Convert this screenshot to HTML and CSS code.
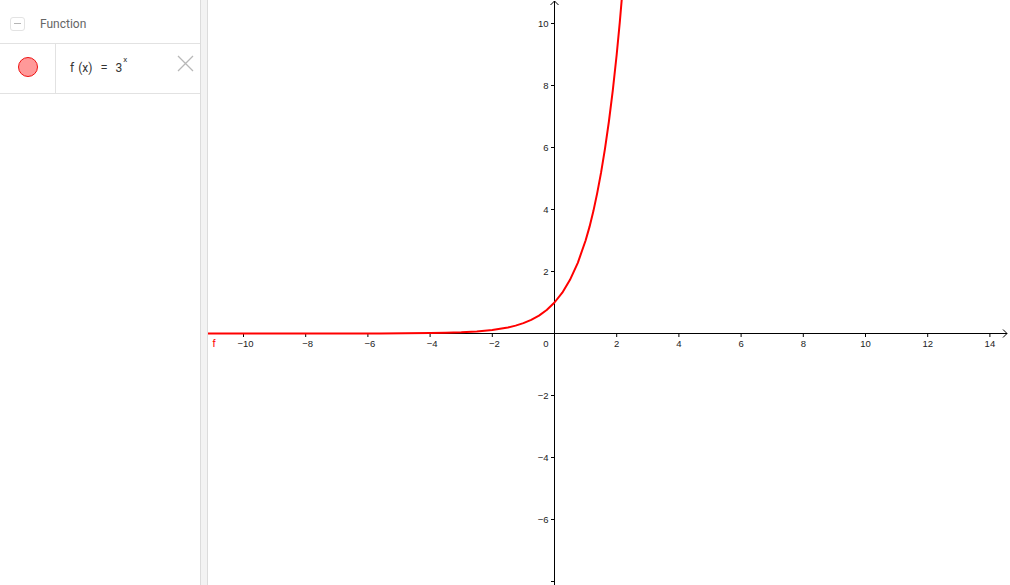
FILE: index.html
```html
<!DOCTYPE html>
<html>
<head>
<meta charset="utf-8">
<link rel="stylesheet" href="styles.css">
</head>
<body>
<div class="app">
  <aside class="panel">
    <div class="panel-header">
      <span class="collapse-btn"><span class="collapse-dash"></span></span>
      <span class="panel-title">Function</span>
    </div>
    <div class="item-row">
      <div class="item-marker"><span class="marker-dot"></span></div>
      <div class="item-formula">f<span class="paren">(x)</span><span class="eq">=</span>3<sup class="exp">x</sup></div>
      <div class="item-close">
        <svg width="17" height="17" viewBox="0 0 17 17"><path d="M1 1 L16 16 M16 1 L1 16" stroke="#b8b8b8" stroke-width="1.3" fill="none"/></svg>
      </div>
    </div>
  </aside>
  <div class="splitter"></div>
  <main class="graph">
    <svg class="graph-svg" width="802" height="585" viewBox="208 0 802 585">
      <g class="axes" stroke="#000" stroke-width="1" fill="none">
        <line x1="208" y1="333.5" x2="1007" y2="333.5"/>
        <line x1="554.5" y1="1" x2="554.5" y2="585"/>
        <polyline points="1003,329.5 1007,333.5 1003,337.5"/>
        <polyline points="550.5,5 554.5,1 558.5,5"/>
        <path d="M243.5 333.5v3.5 M305.7 333.5v3.5 M367.9 333.5v3.5 M430.1 333.5v3.5 M492.3 333.5v3.5 M616.7 333.5v3.5 M678.9 333.5v3.5 M741.1 333.5v3.5 M803.3 333.5v3.5 M865.5 333.5v3.5 M927.7 333.5v3.5 M989.9 333.5v3.5"/>
        <path d="M554.5 23.5h-3.5 M554.5 85.5h-3.5 M554.5 147.5h-3.5 M554.5 209.5h-3.5 M554.5 271.5h-3.5 M554.5 395.5h-3.5 M554.5 457.5h-3.5 M554.5 519.5h-3.5 M554.5 581.5h-3.5"/>
      </g>
      <g class="xlabels">
        <text x="245.5" y="347">−10</text>
        <text x="307.7" y="347">−8</text>
        <text x="369.9" y="347">−6</text>
        <text x="432.1" y="347">−4</text>
        <text x="494.3" y="347">−2</text>
        <text x="616.7" y="347">2</text>
        <text x="678.9" y="347">4</text>
        <text x="741.1" y="347">6</text>
        <text x="803.3" y="347">8</text>
        <text x="865.5" y="347">10</text>
        <text x="927.7" y="347">12</text>
        <text x="989.9" y="347">14</text>
      </g>
      <g class="ylabels">
        <text x="548.5" y="347">0</text>
        <text x="548.5" y="27">10</text>
        <text x="548.5" y="89">8</text>
        <text x="548.5" y="151">6</text>
        <text x="548.5" y="213">4</text>
        <text x="548.5" y="275">2</text>
        <text x="548.5" y="399">−2</text>
        <text x="548.5" y="461">−4</text>
        <text x="548.5" y="523">−6</text>
      </g>
      <polyline class="curve" points="208,333.5 380,333.4 430.1,333.1 445.7,332.8 461.3,332.35 476.8,331.5 492.3,330.06 507.9,327.53 515.6,325.6 523.4,323.17 531.2,319.9 539,315.6 546.7,309.95 554.5,302.5 562.3,292.7 570,279.8 577.8,262.84 585.6,240.5 589.5,226.9 593.4,211.1 597.2,193.1 601.1,172.4 605,148.7 608.9,121.5 612.8,90.4 616.7,54.5 619.8,22.1 622.9,-14.1"/>
      <text class="curve-label" x="212.5" y="347">f</text>
    </svg>
  </main>
</div>
</body>
</html>
```
FILE: styles.css
```css
html, body {
  margin: 0;
  padding: 0;
  background: #fff;
}
.app {
  display: flex;
  width: 1010px;
  height: 585px;
  overflow: hidden;
  font-family: Roboto, "Liberation Sans", sans-serif;
}
.panel {
  width: 200px;
  flex: none;
  display: flex;
  flex-direction: column;
}
.panel-header {
  height: 44px;
  box-sizing: border-box;
  border-bottom: 1px solid #e2e2e2;
  display: flex;
  align-items: center;
  padding-left: 10px;
}
.collapse-btn {
  width: 15px;
  height: 14px;
  box-sizing: border-box;
  border: 1px solid #e3e3e3;
  border-radius: 3px;
  display: flex;
  align-items: center;
  justify-content: center;
  margin-top: 4px;
}
.collapse-dash {
  width: 7px;
  height: 1px;
  background: #b5b5b5;
}
.panel-title {
  margin-left: 15px;
  font-size: 12px;
  color: #666;
  margin-top: 4px;
}
.item-row {
  height: 50px;
  box-sizing: border-box;
  border-bottom: 1px solid #e2e2e2;
  display: flex;
  align-items: stretch;
}
.item-marker {
  width: 56px;
  box-sizing: border-box;
  border-right: 1px solid #e2e2e2;
  display: flex;
  align-items: center;
  justify-content: center;
}
.marker-dot {
  width: 20px;
  height: 20px;
  box-sizing: border-box;
  border-radius: 50%;
  background: #ff9999;
  border: 1px solid #ee1111;
  margin-top: -4px;
}
.item-formula {
  flex: 1;
  display: flex;
  align-items: center;
  padding-left: 14px;
  font-size: 12px;
  color: #333;
  margin-top: -2px;
}
.paren {
  margin-left: 4px;
}
.eq {
  margin: 0 8px 0 8px;
  font-size: 13px;
}
.exp {
  font-size: 8px;
  align-self: flex-start;
  margin-top: 13px;
  margin-left: 1px;
}
.item-close {
  width: 23px;
  display: flex;
  align-items: flex-start;
  padding-top: 11px;
}
.splitter {
  width: 8px;
  flex: none;
  box-sizing: border-box;
  border-left: 1px solid #dcdcdc;
  border-right: 1px solid #dcdcdc;
  background: #f3f3f3;
}
.graph {
  flex: 1;
}
.graph-svg {
  display: block;
}
.xlabels text {
  font-family: "Liberation Sans", Arial, sans-serif;
  font-size: 9.5px;
  fill: #222;
  text-anchor: middle;
}
.ylabels text {
  font-family: "Liberation Sans", Arial, sans-serif;
  font-size: 9.5px;
  fill: #222;
  text-anchor: end;
}
.curve {
  fill: none;
  stroke: #ff0000;
  stroke-width: 2;
  stroke-linejoin: round;
}
.curve-label {
  font-family: "Liberation Sans", Arial, sans-serif;
  font-size: 11px;
  fill: #ff0000;
}
```
